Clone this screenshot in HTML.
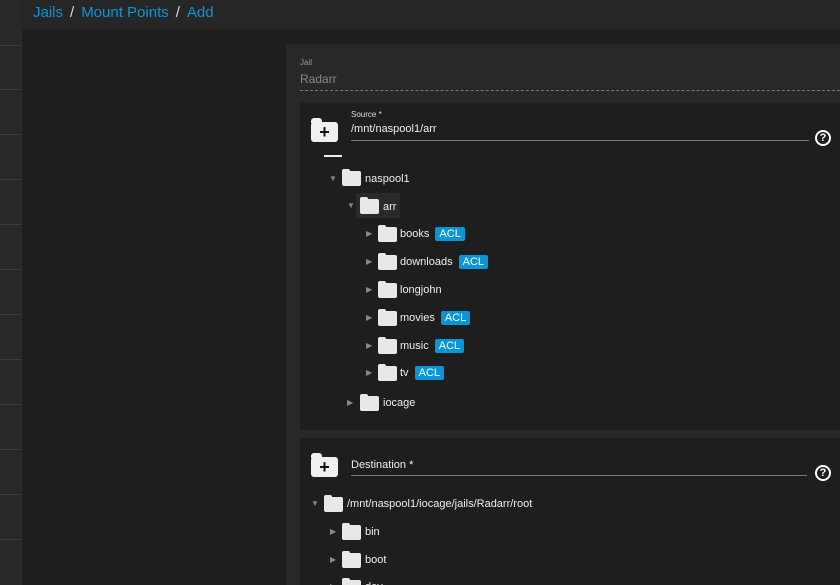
<!DOCTYPE html>
<html style="overflow:hidden;width:840px;height:585px"><head><style>
body{margin:0;width:840px;height:585px;overflow:hidden;background:#1f1f1f;font-family:"Liberation Sans",sans-serif;position:relative;color:#fff}
.a{position:absolute}
.side{left:0;top:0;width:22px;height:585px;background:#282828}
.sd{left:0;width:22px;height:1px;background:#3a3a3a}
.hdr{left:22px;top:0;width:818px;height:29px;background:#262626}
.bc{left:33px;top:4px;font-size:15px;color:#0a95d6}
.bc span{color:#ddd;margin:0 7px}
.card{left:286px;top:44px;width:554px;height:541px;background:#282828;border-radius:3px 0 0 0}
.panel{left:300px;width:540px;background:#1e1e1e}
.fold{width:19px;height:15px;background:#e8e8e8;border-radius:2px}
.fold:before{content:"";position:absolute;left:0;top:-2px;width:8px;height:4px;background:#e8e8e8;border-radius:2px 2px 0 0}
.t{font-size:11px;color:#eee}
.tri{font-size:8px;color:#888}
.acl{background:#0a95d6;color:#fff;font-size:11px;padding:1px 4px;border-radius:2px}
.big{width:27px;height:20px;background:#f0f0f0;border-radius:3px}
.big:before{content:"";position:absolute;left:0;top:-4px;width:11px;height:5px;background:#f0f0f0;border-radius:3px 3px 0 0}
.big b{position:absolute;left:0;right:0;top:0;text-align:center;color:#111;font-size:18px;line-height:20px}
.help{width:12px;height:12px;border:2px solid #fff;border-radius:50%;font-size:11px;font-weight:bold;text-align:center;line-height:12px}
</style></head><body>
<div class="a side"></div>
<div class="a sd" style="top:45px"></div><div class="a sd" style="top:89px"></div><div class="a sd" style="top:134px"></div><div class="a sd" style="top:179px"></div><div class="a sd" style="top:224px"></div><div class="a sd" style="top:269px"></div><div class="a sd" style="top:314px"></div><div class="a sd" style="top:359px"></div><div class="a sd" style="top:404px"></div><div class="a sd" style="top:449px"></div><div class="a sd" style="top:494px"></div><div class="a sd" style="top:539px"></div>
<div class="a hdr"></div>
<div class="a bc">Jails<span>/</span>Mount Points<span>/</span>Add</div>
<div class="a card"></div>
<div class="a" style="left:300px;top:58px;font-size:8px;color:#999">Jail</div>
<div class="a" style="left:300px;top:72px;font-size:12px;color:#888">Radarr</div>
<div class="a" style="left:300px;top:90px;width:540px;border-top:1px dashed #777"></div>
<div class="a panel" style="top:103px;height:327px"></div>
<div class="a panel" style="top:438px;height:147px"></div>
<div class="a big" style="left:311px;top:122px"><b>+</b></div>
<div class="a" style="left:351px;top:110px;font-size:8px;color:#ddd">Source *</div>
<div class="a" style="left:351px;top:123px;font-size:11px;color:#eee">/mnt/naspool1/arr</div>
<div class="a" style="left:351px;top:140px;width:458px;height:1px;background:#777"></div>
<div class="a help" style="left:815px;top:130px">?</div>
<div class="a" style="left:324px;top:155px;width:18px;height:2px;background:#eee"></div>
<div class="a tri" style="left:329px;top:174px">▼</div><div class="a fold" style="left:342px;top:171px"></div><div class="a t" style="left:365px;top:173px">naspool1</div>
<div class="a" style="left:356px;top:193px;height:25px;background:#2a2a2a;width:44px"></div>
<div class="a tri" style="left:347px;top:201px">▼</div><div class="a fold" style="left:360px;top:199px"></div><div class="a t" style="left:383px;top:201px">arr</div>
<div class="a tri" style="left:366px;top:229px">▶</div><div class="a fold" style="left:378px;top:227px"></div><div class="a t" style="left:400px;top:228px">books <span class="acl" style="margin-left:3px">ACL</span></div>
<div class="a tri" style="left:366px;top:257px">▶</div><div class="a fold" style="left:378px;top:255px"></div><div class="a t" style="left:400px;top:256px">downloads <span class="acl" style="margin-left:3px">ACL</span></div>
<div class="a tri" style="left:366px;top:285px">▶</div><div class="a fold" style="left:378px;top:283px"></div><div class="a t" style="left:400px;top:284px">longjohn</div>
<div class="a tri" style="left:366px;top:313px">▶</div><div class="a fold" style="left:378px;top:311px"></div><div class="a t" style="left:400px;top:312px">movies <span class="acl" style="margin-left:3px">ACL</span></div>
<div class="a tri" style="left:366px;top:341px">▶</div><div class="a fold" style="left:378px;top:339px"></div><div class="a t" style="left:400px;top:340px">music <span class="acl" style="margin-left:3px">ACL</span></div>
<div class="a tri" style="left:366px;top:368px">▶</div><div class="a fold" style="left:378px;top:366px"></div><div class="a t" style="left:400px;top:367px">tv <span class="acl" style="margin-left:3px">ACL</span></div>
<div class="a tri" style="left:347px;top:398px">▶</div><div class="a fold" style="left:360px;top:396px"></div><div class="a t" style="left:383px;top:397px">iocage</div>
<div class="a big" style="left:311px;top:457px"><b>+</b></div>
<div class="a" style="left:351px;top:459px;font-size:11px;color:#eee">Destination *</div>
<div class="a" style="left:351px;top:475px;width:456px;height:1px;background:#777"></div>
<div class="a help" style="left:815px;top:465px">?</div>
<div class="a tri" style="left:311px;top:499px">▼</div><div class="a fold" style="left:324px;top:497px"></div><div class="a t" style="left:347px;top:498px">/mnt/naspool1/iocage/jails/Radarr/root</div>
<div class="a tri" style="left:330px;top:527px">▶</div><div class="a fold" style="left:342px;top:525px"></div><div class="a t" style="left:365px;top:526px">bin</div>
<div class="a tri" style="left:330px;top:555px">▶</div><div class="a fold" style="left:342px;top:553px"></div><div class="a t" style="left:365px;top:554px">boot</div>
<div class="a tri" style="left:330px;top:582px">▶</div><div class="a fold" style="left:342px;top:580px"></div><div class="a t" style="left:365px;top:581px">dev</div>
</body></html>
